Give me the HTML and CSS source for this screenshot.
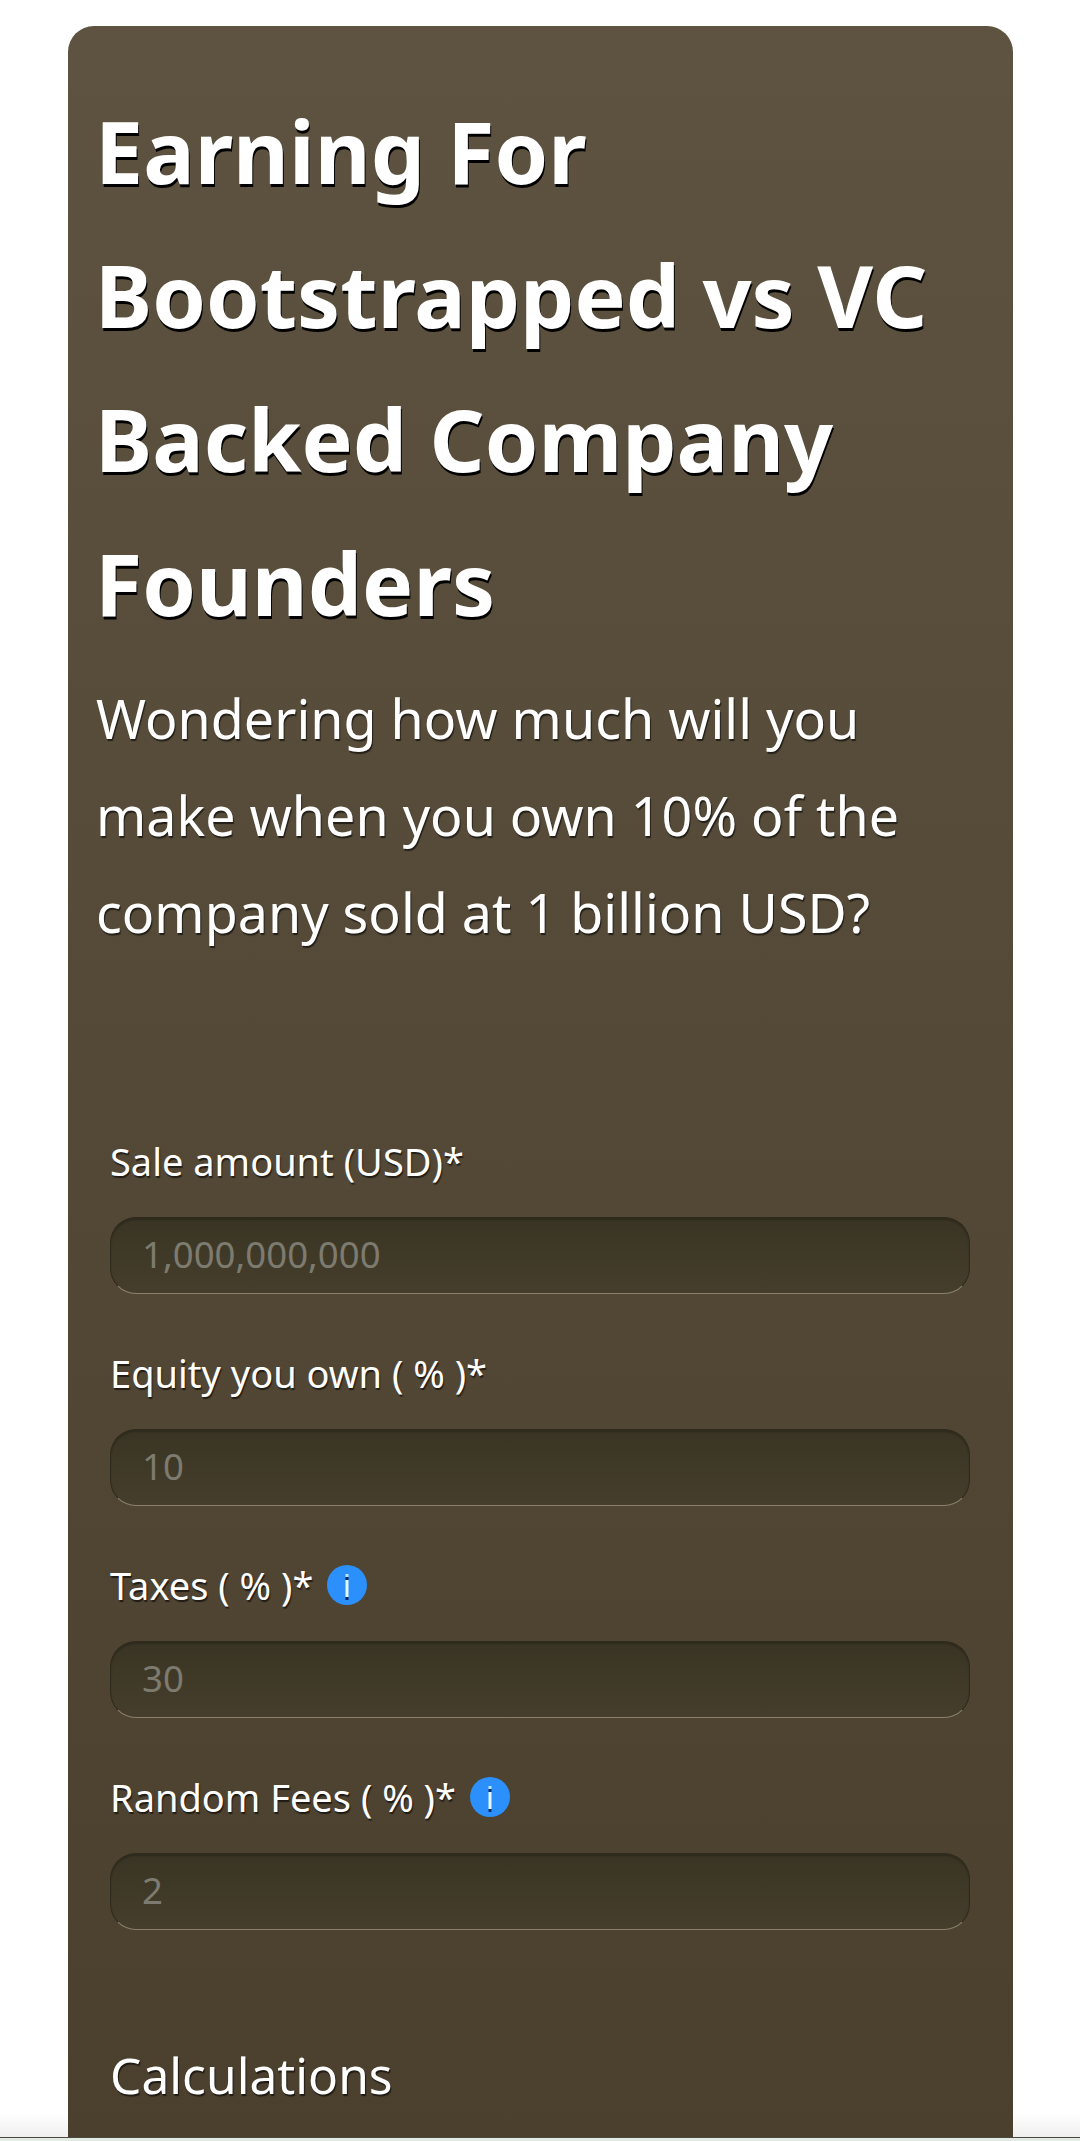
FILE: index.html
```html
<!DOCTYPE html>
<html lang="en">
<head>
    <meta charset="UTF-8">
    <meta name="viewport" content="width=device-width, initial-scale=1.0">
    <title>Earning For Bootstrapped vs VC Backed Company Founders</title>
    <link rel="stylesheet" href="styles.css">
</head>
<body>
    <div class="page">
        <div class="card">
            <h1>Earning For Bootstrapped vs VC Backed Company Founders</h1>
            <p class="lead">Wondering how much will you make when you own 10% of the company sold at 1 billion USD?</p>
            <form class="calc">
                <div class="field">
                    <label for="sale">Sale amount (USD)*</label>
                    <input id="sale" type="text" placeholder="1,000,000,000">
                </div>
                <div class="field">
                    <label for="equity">Equity you own ( % )*</label>
                    <input id="equity" type="text" placeholder="10">
                </div>
                <div class="field">
                    <label for="taxes">Taxes ( % )*
                        <svg class="info" viewBox="0 0 40 40"><circle cx="20" cy="20" r="20" fill="#2b90fb"/><path d="M20 9v3" stroke="#bfe6ff" stroke-width="3"/><path d="M20 12v3" stroke="#0b2a66" stroke-width="3"/><path d="M20 15v17" stroke="#e6f6ff" stroke-width="3"/><path d="M20 32v3" stroke="#0b2a66" stroke-width="3"/></svg>
                    </label>
                    <input id="taxes" type="text" placeholder="30">
                </div>
                <div class="field">
                    <label for="fees">Random Fees ( % )*
                        <svg class="info" viewBox="0 0 40 40"><circle cx="20" cy="20" r="20" fill="#2b90fb"/><path d="M20 9v3" stroke="#bfe6ff" stroke-width="3"/><path d="M20 12v3" stroke="#0b2a66" stroke-width="3"/><path d="M20 15v17" stroke="#e6f6ff" stroke-width="3"/><path d="M20 32v3" stroke="#0b2a66" stroke-width="3"/></svg>
                    </label>
                    <input id="fees" type="text" placeholder="2">
                </div>
            </form>
            <h2>Calculations</h2>
        </div>
    </div>
    <div class="strip"></div>
</body>
</html>
```

FILE: styles.css
```css
*{
    box-sizing: border-box;
    margin: 0;
    padding: 0;
}
html,body{
    background: #fff;
    overflow: hidden;
}
body{
    font-family: "Noto Sans", "Open Sans", sans-serif;
    color: #fff;
}
.page{
    height: 2137px;
    overflow: hidden;
    padding: 26px 67px 0 68px;
    background: linear-gradient(to top, #efefef, #fff 24px);
}
.card{
    height: 2140px;
    border-radius: 26px 26px 0 0;
    background: linear-gradient(to bottom, #5d5340, #4b3f2e 2111px);
    padding: 53px 32px 0 27px;
}
h1{
    font-size: 86px;
    font-weight: 700;
    line-height: 144px;
    text-shadow: 1px 3px 0 #000;
}
.lead{
    font-size: 53.8px;
    line-height: 97px;
    margin-top: 15px;
    margin-left: 1px;
    text-shadow: 1px 2px 1px rgba(0,0,0,.6);
}
.calc{
    margin-top: 170px;
    padding-left: 15px;
    padding-right: 11px;
}
.field{
    height: 212px;
}
label{
    display: flex;
    align-items: center;
    gap: 14px;
    height: 60px;
    font-size: 38px;
    text-shadow: 1px 2px 1px rgba(0,0,0,.6);
}
.info{
    width: 40px;
    height: 40px;
    flex: none;
}
input{
    display: block;
    width: 100%;
    height: 77px;
    margin-top: 26px;
    padding: 0 31px 4px;
    border: 1px solid #2e2a1c;
    border-bottom-color: #8a8068;
    border-radius: 26px;
    background: linear-gradient(to bottom, #393423, #463e2c);
    box-shadow: inset 0 2px 2px rgba(0,0,0,.2);
    font-family: inherit;
    font-size: 36.6px;
    outline: none;
}
input::placeholder{
    color: #7d7b70;
    opacity: 1;
}
h2{
    margin-top: 62px;
    padding-left: 15px;
    font-size: 49.7px;
    font-weight: 400;
    text-shadow: 1px 2px 1px rgba(0,0,0,.6);
}
.strip{
    height: 4px;
    background: #e3eae4;
    border-top: 1px solid #4a4a40;
}
```
